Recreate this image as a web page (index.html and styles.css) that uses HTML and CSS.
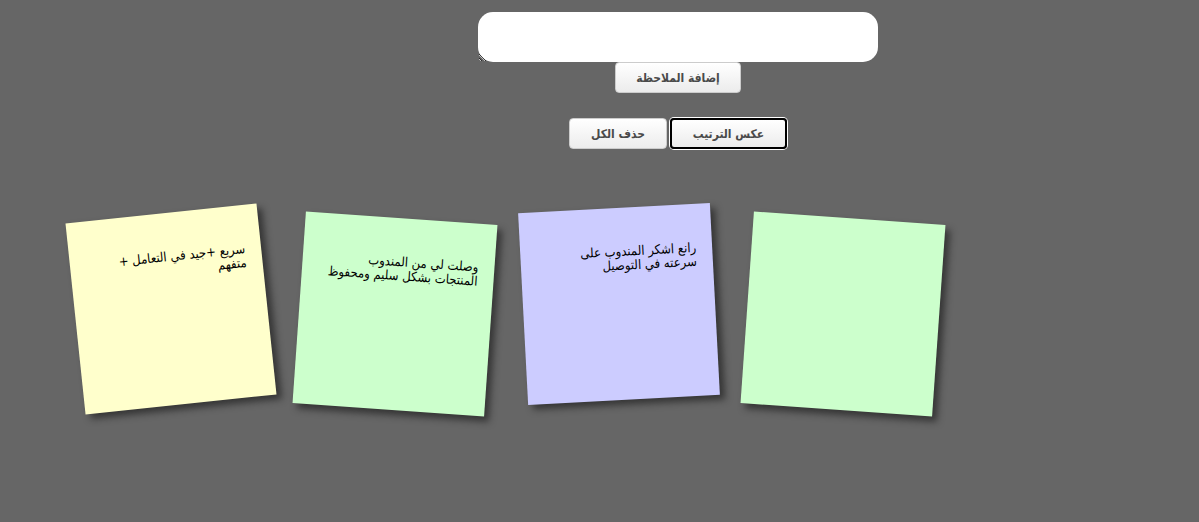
FILE: index.html
```
<!DOCTYPE html>
<html lang="ar">
<head>
<meta charset="utf-8">
<title>ملاحظات</title>
<link rel="stylesheet" href="styles.css">
</head>
<body>
<div class="top">
  <textarea class="entry" dir="rtl"></textarea>
  <button class="btn btn-add" type="button">إضافة الملاحظة</button>
  <div class="actions">
    <button class="btn btn-clear" type="button">حذف الكل</button>
    <button class="btn btn-rev is-focus" type="button">عكس الترتيب</button>
  </div>
</div>
<ul class="notes">
  <li class="note note-1"><p class="note-text">سريع +جيد في التعامل +<br>متفهم</p></li>
  <li class="note note-2"><p class="note-text">وصلت لي من المندوب<br>المنتجات بشكل سليم ومحفوظ</p></li>
  <li class="note note-3"><p class="note-text">رانع اشكر المندوب على<br>سرعته في التوصيل</p></li>
  <li class="note note-4"><p class="note-text"></p></li>
</ul>
</body>
</html>
```

FILE: styles.css
```
html, body {
  margin: 0;
  padding: 0;
}
body {
  background: #666666;
  font-family: "DejaVu Sans Condensed", Arial, sans-serif;
  height: 522px;
  overflow: hidden;
}
.top {
  display: flex;
  flex-direction: column;
  align-items: center;
  padding: 12px 0 0 157px;
}
.entry {
  display: block;
  box-sizing: border-box;
  width: 400px;
  height: 50px;
  margin: 0;
  border: none;
  border-radius: 15px;
  background: #fff;
  padding: 6px 10px;
  font-family: inherit;
  font-size: 14px;
  outline: none;
}
.btn {
  box-sizing: border-box;
  height: 31px;
  margin: 0;
  padding: 0;
  border: 1px solid #cccccc;
  border-radius: 4px;
  background: linear-gradient(#ffffff, #ececec);
  color: #4a4a4a;
  font-family: "DejaVu Sans Condensed", Arial, sans-serif;
  font-weight: bold;
  font-size: 12px;
}
.btn-add {
  width: 126px;
}
.actions {
  display: flex;
  gap: 3px;
  margin-top: 25px;
}
.btn-clear {
  width: 98px;
}
.btn-rev {
  width: 117px;
}
.is-focus {
  border: 2px solid #000;
  box-shadow: 0 0 0 1px #fff;
}
.notes {
  list-style: none;
  margin: 0;
  padding: 64px 0 0 59px;
  display: flex;
}
.note {
  margin: 0 16px;
  box-sizing: border-box;
  width: 192px;
  height: 192px;
  padding: 16px;
  background: #ffffcc;
  box-shadow: 5px 5px 7px rgba(33, 33, 33, 0.7);
  transform: rotate(-6deg);
}
.note-2, .note-4 {
  background: #ccffcc;
  transform: translateY(5px) rotate(4deg);
}
.note-3 {
  background: #ccccff;
  transform: translateY(-5px) rotate(-3deg);
}
.note-text {
  margin: 21px 0 0;
  direction: rtl;
  text-align: right;
  white-space: nowrap;
  color: #000;
  font-family: "DejaVu Sans Condensed", Arial, sans-serif;
  font-size: 13px;
  line-height: 14px;
}
```
